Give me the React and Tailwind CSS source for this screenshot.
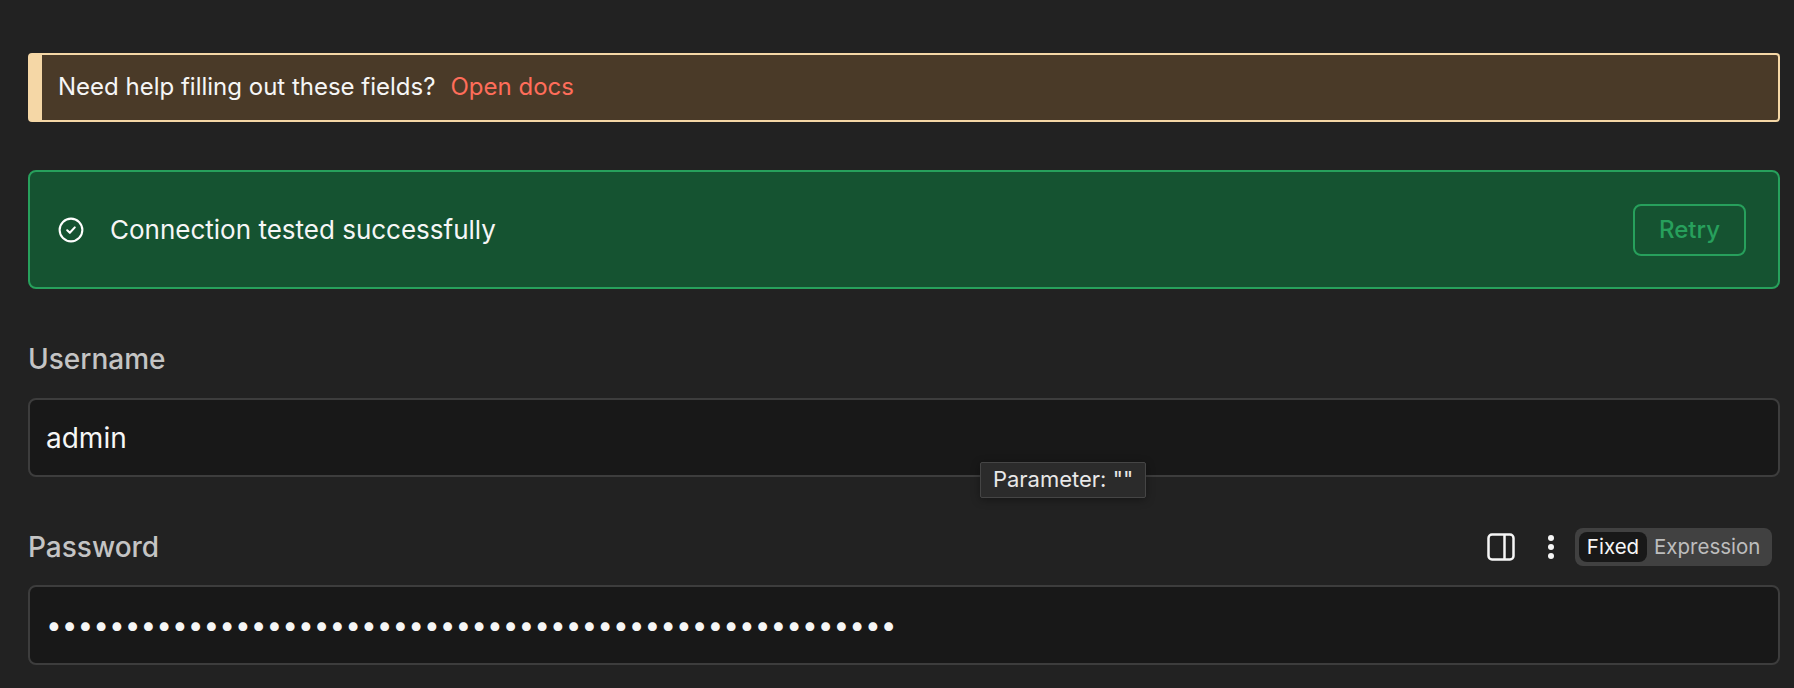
export default function App() {
  const font = { fontFamily: "Inter, 'Liberation Sans', sans-serif" };
  return (
    <div style={font} className="relative h-[688px] w-[1794px] overflow-hidden bg-[#222222] pl-[28px] pr-[14px] pt-[53px] text-white">
      <div className="flex h-[69px] items-center rounded-[4px] border-2 border-l-[14px] border-[#f5d7a6] bg-[#4a3a28] pb-[2px] pl-[16px] text-[24px] text-[#f6f6f6]">
        <span>Need help filling out these fields?</span>
        <a className="ml-[15px] text-[#ff6d5a]">Open docs</a>
      </div>

      <div className="mt-[48px] flex h-[119px] items-center rounded-[8px] border-2 border-[#27a05c] bg-[#155331] pl-[28px] pr-[32px]">
        <svg width="26" height="26" viewBox="0 0 24 24" fill="none" stroke="#ffffff" strokeWidth="1.9" strokeLinecap="round" strokeLinejoin="round" className="shrink-0">
          <circle cx="12" cy="12" r="10.5" />
          <path d="M8.5 12.3l2.4 2.3 4.6-5" />
        </svg>
        <span className="ml-[26px] text-[26px] text-[#f6f6f6]">Connection tested successfully</span>
        <button className="ml-auto h-[52px] w-[113px] rounded-[8px] border-2 border-[#27a05c] text-[24px] font-medium text-[#27a05c]">Retry</button>
      </div>

      <div className="mt-[52px]">
        <div className="flex h-[36px] items-center text-[28px] font-medium text-[#c4c4c4]">Username</div>
        <div className="mt-[21px] flex h-[79px] items-center rounded-[8px] border-2 border-[#3d3d3d] bg-[#181818] pl-[16px] text-[28px] text-[#f6f6f6]">admin</div>
      </div>

      <div className="mt-[51px]">
        <div className="flex h-[38px] items-center">
          <span className="text-[28px] font-medium text-[#c4c4c4]">Password</span>
          <svg width="28" height="28" viewBox="0 0 28 28" fill="none" stroke="#f6f6f6" strokeWidth="2.5" className="ml-auto shrink-0">
            <rect x="1.5" y="1.5" width="25" height="25" rx="3.5" />
            <path d="M17.5 1.5v25" />
          </svg>
          <svg width="8" height="28" viewBox="0 0 8 28" fill="#f6f6f6" className="ml-[32px] shrink-0">
            <circle cx="4" cy="5" r="3" />
            <circle cx="4" cy="14" r="3" />
            <circle cx="4" cy="23" r="3" />
          </svg>
          <div className="ml-[20px] mr-[8px] flex h-[38px] w-[197px] items-center rounded-[8px] bg-[#414141] px-[4px] text-[20.5px]">
            <span className="flex h-[30px] w-[68px] items-center justify-center rounded-[8px] bg-[#181818] text-[#f6f6f6]">Fixed</span>
            <span className="ml-[7px] text-[#bdbdbd]">Expression</span>
          </div>
        </div>
        <div className="mt-[19px] flex h-[80px] items-center rounded-[8px] border-2 border-[#3d3d3d] bg-[#181818] pl-[16px]">
          <input readOnly type="password" value={"x".repeat(54)} className="w-[1000px] bg-transparent text-[28px] text-[#f6f6f6] outline-none" />
        </div>
      </div>

      <div className="absolute left-[980px] top-[462px] flex h-[36px] w-[166px] items-center justify-center rounded-[2px] border border-[#454545] bg-[#2b2b2b] pb-[2px] text-[22px] text-[#e8e8e8] shadow-[0_2px_8px_rgba(0,0,0,0.35)]">
        Parameter: ""
      </div>
    </div>
  );
}
